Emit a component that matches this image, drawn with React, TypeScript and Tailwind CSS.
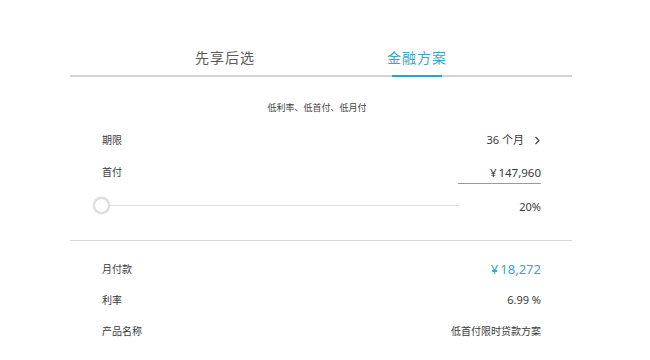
import React from "react";

const font = { fontFamily: '"Noto Sans", "Noto Sans CJK SC", sans-serif' };

function Row({ label, children }: { label: string; children: React.ReactNode }) {
  return (
    <div className="flex h-[31px] items-center justify-between pl-[32px] pr-[31px]">
      <span className="text-[10px] text-[#3a3a3a]">{label}</span>
      {children}
    </div>
  );
}

export default function App() {
  return (
    <div className="h-[360px] w-[650px] overflow-hidden bg-white" style={font}>
      <div className="ml-[70px] w-[502px]">
        <div className="flex justify-center border-b-2 border-[#d4d4d4] pt-[47px] pb-[6px]">
          <div className="w-[192px] text-center text-[14px] leading-[22px] tracking-[1px] text-[#5a5a5a]">先享后选</div>
          <div className="relative w-[192px] text-center text-[14px] leading-[22px] tracking-[1px] text-[#3aa6c6]">
            金融方案
            <div className="absolute left-1/2 bottom-[-8px] h-[2px] w-[50px] -translate-x-1/2 bg-[#2aa3c8]" />
          </div>
        </div>

        <div className="mt-[21px] flex h-[20px] items-center justify-center pr-[8px] text-[9px] text-[#444]">
          低利率、低首付、低月付
        </div>

        <div className="mt-[6px] flex h-[32px] items-center justify-between pl-[32px] pr-[31px]">
          <span className="text-[10px] text-[#3a3a3a]">期限</span>
          <span className="flex items-center text-[11px] text-[#3a3a3a]">
            36 个月
            <svg className="ml-[10px]" width="7" height="9" viewBox="0 0 7 9" fill="none">
              <path d="M1.5 1 L5 4.5 L1.5 8" stroke="#444" strokeWidth="1.2" />
            </svg>
          </span>
        </div>

        <div className="flex h-[32px] items-center justify-between pl-[32px] pr-[31px]">
          <span className="text-[10px] text-[#3a3a3a]">首付</span>
          <span className="mt-[4px] w-[83px] border-b border-[#999] pb-[2px] text-right text-[11.5px] text-[#3a3a3a]">¥{"\u2009"}147,960</span>
        </div>

        <div className="flex h-[34px] items-center justify-between pl-[23px] pr-[31px]">
          <div className="flex w-[366px] items-center">
            <div className="h-[17px] w-[17px] shrink-0 rounded-full border-[2.5px] border-[#dcdcdc] bg-white shadow-[0_0_2px_rgba(0,0,0,0.12)]" />
            <div className="h-[1px] flex-1 bg-[#dedede]" />
          </div>
          <span className="mt-[4px] text-[11px] text-[#3a3a3a]">20%</span>
        </div>

        <div className="mt-[18px] h-[1px] bg-[#d8d8d8]" />

        <div className="mt-[13px]">
          <Row label="月付款">
            <span className="text-[13px] text-[#3aa6c6]">¥{"\u2009"}18,272</span>
          </Row>
          <Row label="利率">
            <span className="text-[11px] text-[#3a3a3a]">6.99 %</span>
          </Row>
          <Row label="产品名称">
            <span className="text-[10px] text-[#3a3a3a]">低首付限时贷款方案</span>
          </Row>
        </div>
      </div>
    </div>
  );
}
